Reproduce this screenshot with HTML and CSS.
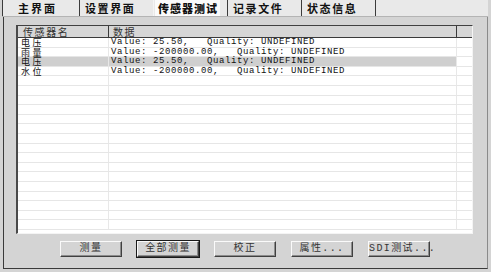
FILE: index.html
```html
<!DOCTYPE html>
<html lang="zh">
<head>
<meta charset="utf-8">
<title>传感器测试</title>
<link rel="stylesheet" href="styles.css">
</head>
<body>
<div class="window">
  <div class="tabs">
    <div class="tab first">主界面</div>
    <div class="tab">设置界面</div>
    <div class="tab active"><span class="active-bg">传感器测试</span></div>
    <div class="tab">记录文件</div>
    <div class="tab">状态信息</div>
    <div class="tab end"></div>
  </div>
  <div class="panel">
    <div class="list">
      <div class="list-head">
        <div class="hcell c1">传感器名</div>
        <div class="hcell c2">数据</div>
        <div class="hcell c3"></div>
      </div>
      <div class="rows">
        <div class="row"><div class="cell c1 zh">电压</div><div class="cell c2 mono">Value: 25.50,   Quality: UNDEFINED</div><div class="cell c3"></div></div>
        <div class="row"><div class="cell c1 zh">雨量</div><div class="cell c2 mono">Value: -200000.00,   Quality: UNDEFINED</div><div class="cell c3"></div></div>
        <div class="row selected"><div class="cell c1 zh">电压</div><div class="cell c2 mono">Value: 25.50,   Quality: UNDEFINED</div><div class="cell c3"></div></div>
        <div class="row"><div class="cell c1 zh">水位</div><div class="cell c2 mono">Value: -200000.00,   Quality: UNDEFINED</div><div class="cell c3"></div></div>
        <div class="row"><div class="cell c1"></div><div class="cell c2"></div><div class="cell c3"></div></div>
        <div class="row"><div class="cell c1"></div><div class="cell c2"></div><div class="cell c3"></div></div>
        <div class="row"><div class="cell c1"></div><div class="cell c2"></div><div class="cell c3"></div></div>
        <div class="row"><div class="cell c1"></div><div class="cell c2"></div><div class="cell c3"></div></div>
        <div class="row"><div class="cell c1"></div><div class="cell c2"></div><div class="cell c3"></div></div>
        <div class="row"><div class="cell c1"></div><div class="cell c2"></div><div class="cell c3"></div></div>
        <div class="row"><div class="cell c1"></div><div class="cell c2"></div><div class="cell c3"></div></div>
        <div class="row"><div class="cell c1"></div><div class="cell c2"></div><div class="cell c3"></div></div>
        <div class="row"><div class="cell c1"></div><div class="cell c2"></div><div class="cell c3"></div></div>
        <div class="row"><div class="cell c1"></div><div class="cell c2"></div><div class="cell c3"></div></div>
        <div class="row"><div class="cell c1"></div><div class="cell c2"></div><div class="cell c3"></div></div>
        <div class="row"><div class="cell c1"></div><div class="cell c2"></div><div class="cell c3"></div></div>
        <div class="row"><div class="cell c1"></div><div class="cell c2"></div><div class="cell c3"></div></div>
        <div class="row"><div class="cell c1"></div><div class="cell c2"></div><div class="cell c3"></div></div>
        <div class="row"><div class="cell c1"></div><div class="cell c2"></div><div class="cell c3"></div></div>
        <div class="row"><div class="cell c1"></div><div class="cell c2"></div><div class="cell c3"></div></div>
      </div>
    </div>
    <div class="buttons">
      <div class="btn">测量</div>
      <div class="btn default">全部测量</div>
      <div class="btn">校正</div>
      <div class="btn">属性...</div>
      <div class="btn">SDI测试...</div>
    </div>
  </div>
</div>
</body>
</html>
```
FILE: styles.css
```css
html, body {
  margin: 0;
  padding: 0;
}
body {
  width: 491px;
  height: 272px;
  overflow: hidden;
  background: #d4d4d4;
  font-family: "Noto Sans CJK SC", "Liberation Sans", sans-serif;
  color: #111;
}
.window {
  display: flex;
  flex-direction: column;
}
.tabs {
  display: flex;
  height: 17px;
  box-sizing: border-box;
  margin-left: 2px;
  width: 486px;
  background: #e9e9e9;
  border-bottom: 1px solid #b4b4b4;
}
.tab {
  box-sizing: border-box;
  width: 74px;
  height: 16px;
  padding-left: 5px;
  border-left: 1px solid #3c3c3c;
  font-size: 11px;
  font-weight: 700;
  letter-spacing: 1.6px;
  line-height: 16px;
  white-space: nowrap;
  color: #111;
}
.tab.first {
  width: 77px;
  padding-left: 15px;
  letter-spacing: 2px;
}
.tab.active {
  border-left: 1px solid #f4f4f4;
  padding-left: 1px;
}
.active-bg {
  display: block;
  width: 65px;
  height: 16px;
  padding-left: 3px;
  box-sizing: border-box;
  background: #fbfbfb;
  font-weight: 900;
  letter-spacing: 1px;
}
.tab.end {
  flex: 1;
}
.panel {
  box-sizing: border-box;
  margin-left: 3px;
  width: 485px;
  height: 252px;
  padding: 8px 0 0 12px;
  border-left: 1px solid #3a3a3a;
  border-right: 1px solid #8a8a8a;
  border-bottom: 1px solid #3a3a3a;
  display: flex;
  flex-direction: column;
}
.list {
  box-sizing: border-box;
  width: 457px;
  height: 209px;
  background: #fff;
  border-left: 2px solid #4a4a4a;
  border-top: 1px solid #404040;
  border-right: 1px solid #f4f4f4;
  border-bottom: 1px solid #f4f4f4;
  overflow: hidden;
}
.list-head {
  display: grid;
  grid-template-columns: 91px 348px 1fr;
  height: 12px;
  box-sizing: border-box;
  border-bottom: 1px solid #3a3a3a;
  background: #d6d6d6;
}
.hcell {
  box-sizing: border-box;
  border-right: 1px solid #3a3a3a;
  font-size: 10px;
  letter-spacing: 1.6px;
  line-height: 11px;
  color: #333;
  white-space: nowrap;
}
.hcell.c1 { padding-left: 5px; }
.hcell.c2 { padding-left: 4px; }
.hcell.c3 { border-right: none; }
.rows {
  display: flex;
  flex-direction: column;
}
.row {
  display: grid;
  grid-template-columns: 91px 348px 1fr;
  height: 9.6px;
  box-sizing: border-box;
  border-bottom: 1px solid #e6e6e6;
}
.cell {
  box-sizing: border-box;
  border-right: 1px solid #e8e8e8;
  white-space: pre;
  overflow: visible;
  color: #111;
}
.cell.c3 { border-right: none; }
.row.selected .c1,
.row.selected .c2 {
  background: #cfcfcf;
}
.zh {
  font-size: 9px;
  letter-spacing: 2.5px;
  line-height: 9px;
  padding-left: 3px;
}
.mono {
  font-family: "Liberation Mono", "DejaVu Sans Mono", monospace;
  font-size: 9px;
  letter-spacing: 0.6px;
  line-height: 9px;
  padding-left: 2px;
}
.buttons {
  display: flex;
  gap: 15px;
  margin-top: 7px;
  padding-left: 44px;
}
.btn {
  box-sizing: border-box;
  width: 62px;
  height: 16px;
  background: #d4d4d4;
  border-top: 1px solid #fafafa;
  border-left: 1px solid #fafafa;
  border-right: 1px solid #404040;
  border-bottom: 1px solid #404040;
  box-shadow: inset -1px -1px 0 #8c8c8c;
  font-family: "Liberation Mono", "Noto Sans CJK SC", monospace;
  font-size: 10px;
  letter-spacing: 1.4px;
  line-height: 14px;
  text-align: center;
  color: #333;
  white-space: nowrap;
}
.btn.default {
  outline: 1px solid #1a1a1a;
}
```
